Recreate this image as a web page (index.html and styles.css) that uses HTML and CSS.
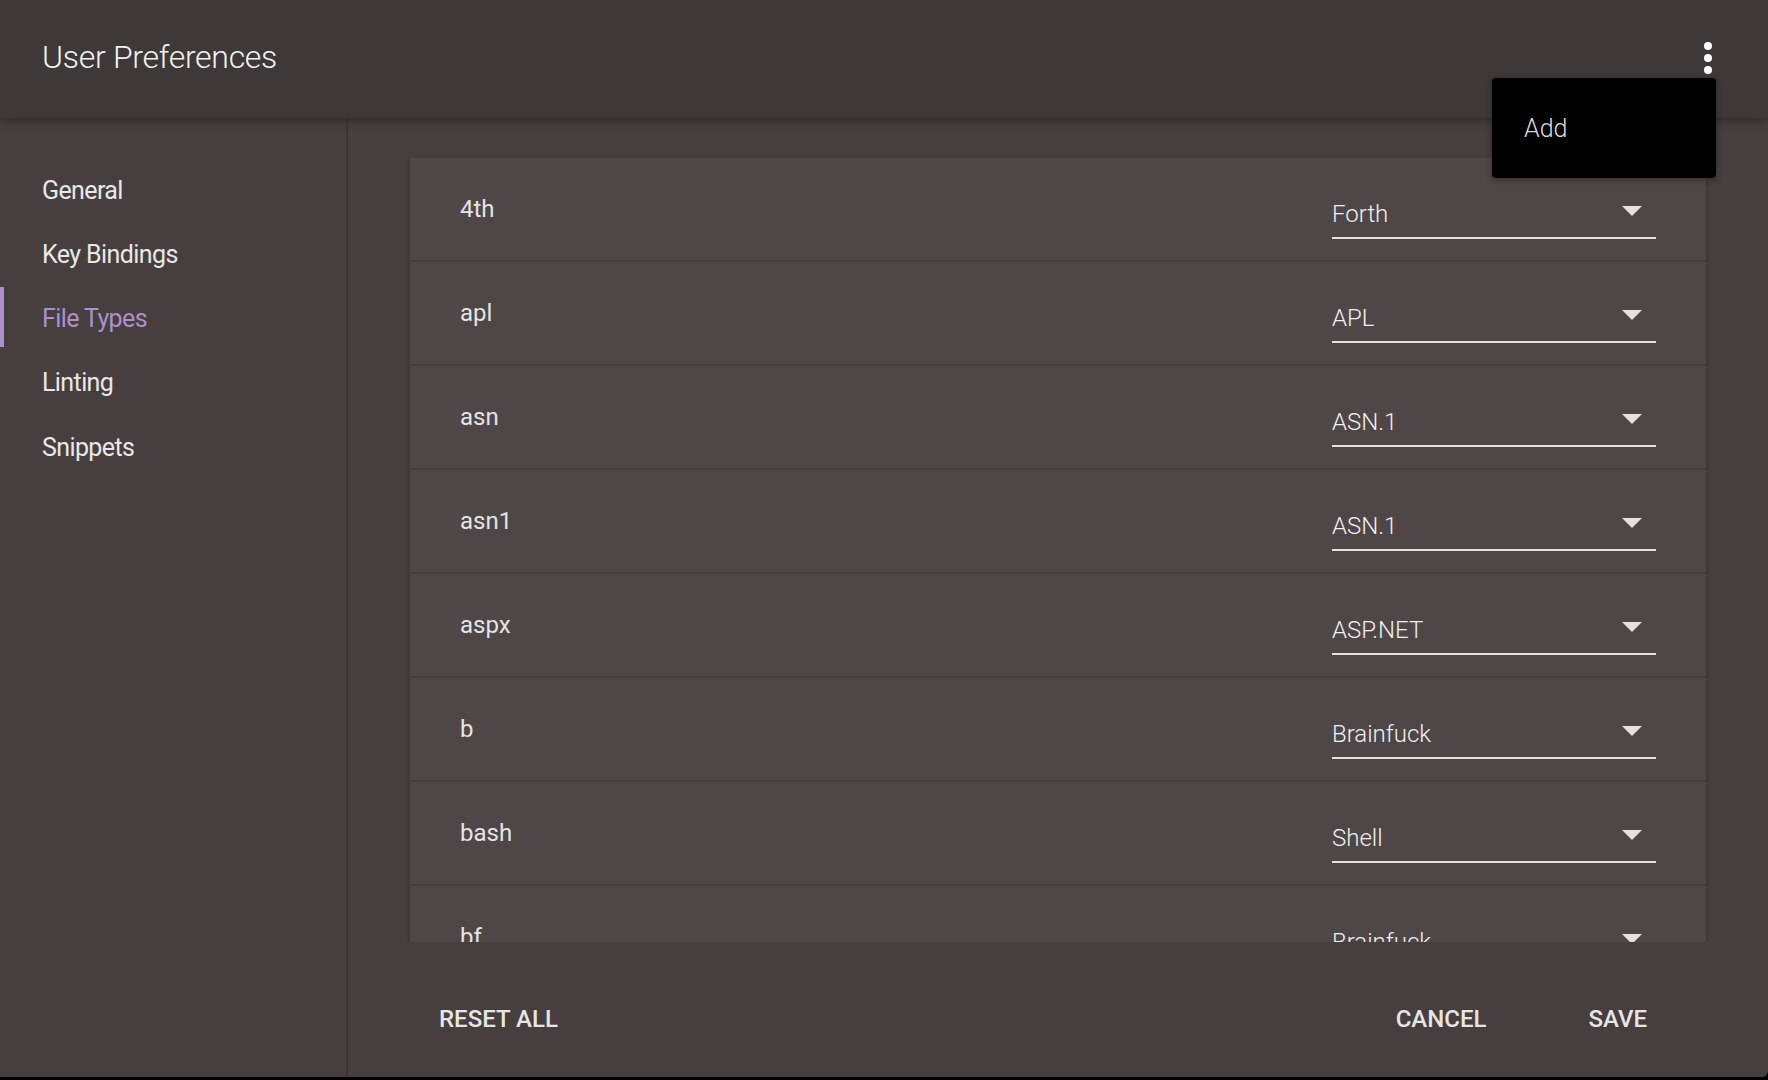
FILE: index.html
```html
<!DOCTYPE html>
<html lang="en">
<head>
<meta charset="utf-8">
<title>User Preferences</title>
<link rel="stylesheet" href="styles.css">
</head>
<body>
<div class="app">
  <header class="topbar">
    <h1 class="title">User Preferences</h1>
    <button class="more" aria-label="More options">
      <svg width="8" height="32" viewBox="0 0 8 32"><circle cx="4" cy="4" r="4" fill="#fff"/><circle cx="4" cy="16" r="4" fill="#fff"/><circle cx="4" cy="28" r="4" fill="#fff"/></svg>
    </button>
  </header>
  <div class="layout">
    <nav class="sidebar">
      <a class="nav-item">General</a>
      <a class="nav-item">Key Bindings</a>
      <a class="nav-item active">File Types</a>
      <a class="nav-item">Linting</a>
      <a class="nav-item">Snippets</a>
    </nav>
    <main class="content">
      <div class="scroll">
        <div class="card">
          <div class="row"><span class="ext">4th</span><div class="select"><span>Forth</span><i class="caret"></i></div></div>
          <div class="row"><span class="ext">apl</span><div class="select"><span>APL</span><i class="caret"></i></div></div>
          <div class="row"><span class="ext">asn</span><div class="select"><span>ASN.1</span><i class="caret"></i></div></div>
          <div class="row"><span class="ext">asn1</span><div class="select"><span>ASN.1</span><i class="caret"></i></div></div>
          <div class="row"><span class="ext">aspx</span><div class="select"><span>ASP.NET</span><i class="caret"></i></div></div>
          <div class="row"><span class="ext">b</span><div class="select"><span>Brainfuck</span><i class="caret"></i></div></div>
          <div class="row"><span class="ext">bash</span><div class="select"><span>Shell</span><i class="caret"></i></div></div>
          <div class="row"><span class="ext">bf</span><div class="select"><span>Brainfuck</span><i class="caret"></i></div></div>
          <div class="row"><span class="ext">bib</span><div class="select"><span>BibTeX</span><i class="caret"></i></div></div>
        </div>
      </div>
      <footer class="actions">
        <button class="btn">RESET ALL</button>
        <span class="spacer"></span>
        <button class="btn cancel">CANCEL</button>
        <button class="btn">SAVE</button>
      </footer>
    </main>
  </div>
  <div class="menu"><div class="menu-item">Add</div></div>
</div>
</body>
</html>
```

FILE: styles.css
```css
* { box-sizing: border-box; }
html, body { margin: 0; padding: 0; }
body {
  background: #000;
  width: 1768px;
  height: 1080px;
  overflow: hidden;
  font-family: Roboto, "Liberation Sans", sans-serif;
  color: #e6e6e6;
}
.app {
  position: relative;
  width: 1768px;
  height: 1077px;
  background: #463e3f;
  display: flex;
  flex-direction: column;
  border-bottom-right-radius: 6px;
  overflow: hidden;
}
.topbar {
  position: relative;
  z-index: 2;
  flex: none;
  height: 118px;
  background: #3e3839;
  display: flex;
  align-items: center;
  justify-content: space-between;
  padding: 0 56px 2px 42px;
  box-shadow: 0 2px 10px rgba(0,0,0,0.35);
}
.title {
  margin: 0 0 2px 0;
  font-size: 32px;
  line-height: 40px;
  font-weight: 300;
  letter-spacing: -0.3px;
  color: #f2f2f2;
}
.more {
  background: none;
  border: 0;
  padding: 0;
  width: 8px;
  height: 32px;
  display: block;
}
.more svg { display: block; }
.layout {
  flex: 1;
  display: flex;
  min-height: 0;
}
.sidebar {
  flex: none;
  width: 348px;
  border-right: 2px solid #3b3435;
  padding-top: 40.5px;
  display: flex;
  flex-direction: column;
}
.nav-item {
  position: relative;
  height: 64.3px;
  line-height: 64px;
  padding-left: 42px;
  font-size: 25px;
  letter-spacing: -0.6px;
  color: #e8e8e8;
}
.nav-item.active { color: #ad8fca; }
.nav-item.active::before {
  content: "";
  position: absolute;
  left: 0;
  top: 0;
  width: 4px;
  height: 60px;
  background: #ad8fca;
}
.content {
  flex: 1;
  display: flex;
  flex-direction: column;
  min-width: 0;
}
.scroll {
  flex: none;
  height: 824px;
  padding: 40px 62px 0 62px;
  overflow: hidden;
}
.card {
  background: #4e4647;
  box-shadow: 0 1px 4px rgba(0,0,0,0.25);
}
.row {
  height: 104px;
  display: flex;
  align-items: flex-start;
  justify-content: space-between;
  padding: 0 50px;
  border-bottom: 2px solid #453d3e;
}
.ext {
  margin-top: 36.5px;
  font-size: 24px;
  line-height: 28px;
  color: #e4e4e4;
}
.select {
  margin-top: 42px;
  width: 324px;
  padding-bottom: 9px;
  border-bottom: 2px solid #e2e2e2;
  display: flex;
  align-items: flex-start;
  justify-content: space-between;
  font-size: 24px;
  line-height: 28px;
  font-weight: 300;
  color: #f0f0f0;
}
.caret {
  width: 0;
  height: 0;
  margin: 6px 14px 0 0;
  border-left: 10px solid transparent;
  border-right: 10px solid transparent;
  border-top: 10px solid #e2e2e2;
}
.actions {
  flex: 1;
  display: flex;
  align-items: flex-start;
  padding: 63px 121px 0 91px;
}
.spacer { flex: 1; }
.btn {
  background: none;
  border: 0;
  padding: 0;
  font-family: Roboto, "Liberation Sans", sans-serif;
  font-size: 24px;
  line-height: 28px;
  font-weight: 500;
  color: #e6e6e6;
}
.cancel { margin-right: 102px; }
.menu {
  position: absolute;
  z-index: 3;
  top: 78px;
  left: 1492px;
  width: 224px;
  height: 100px;
  background: #000;
  border-radius: 4px;
  box-shadow: 0 2px 6px rgba(0,0,0,0.3);
}
.menu-item {
  padding: 36px 0 0 32px;
  font-size: 25px;
  line-height: 30px;
  font-weight: 300;
  color: #dcdcdc;
}
```
